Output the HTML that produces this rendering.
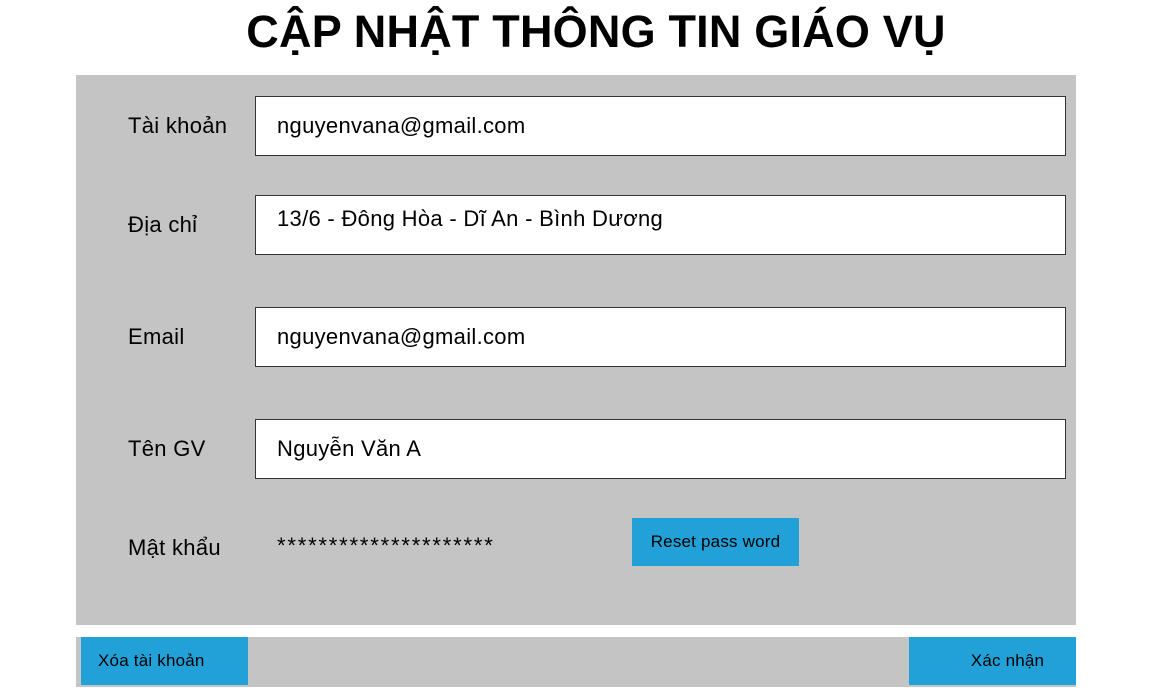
<!DOCTYPE html>
<html><head><meta charset="utf-8"><style>
body{margin:0;width:1152px;height:700px;background:#fff;font-family:"Liberation Sans",sans-serif;position:relative;overflow:hidden;color:#000}
.a{position:absolute}
h1{position:absolute;left:0;width:1192px;top:5px;margin:0;text-align:center;font-size:45px;font-weight:bold;line-height:54px;letter-spacing:0.2px}
.panel{left:76px;top:75px;width:1000px;height:550px;background:#c4c4c4}
.lab{left:128px;font-size:22px;line-height:30px;letter-spacing:0.3px}
.inp{left:255px;width:809px;height:58px;background:#fff;border:1px solid #333}
.inp span{position:absolute;left:21px;font-size:22px;line-height:30px;top:14px;letter-spacing:0.3px}
.btn{background:#21a1d8;font-size:17px;line-height:48px;height:48px;letter-spacing:0.2px}
</style></head><body>
<h1>CẬP NHẬT THÔNG TIN GIÁO VỤ</h1>
<div class="a panel"></div>
<div class="a lab" style="top:111px">Tài khoản</div>
<div class="a inp" style="top:96px"><span>nguyenvana@gmail.com</span></div>
<div class="a lab" style="top:210px">Địa chỉ</div>
<div class="a inp" style="top:195px"><span style="top:8px">13/6 - Đông Hòa - Dĩ An - Bình Dương</span></div>
<div class="a lab" style="top:322px">Email</div>
<div class="a inp" style="top:307px"><span>nguyenvana@gmail.com</span></div>
<div class="a lab" style="top:434px">Tên GV</div>
<div class="a inp" style="top:419px"><span>Nguyễn Văn A</span></div>
<div class="a lab" style="top:533px">Mật khẩu</div>
<div class="a" style="left:277px;top:531px;font-size:22px;line-height:30px;letter-spacing:1.8px">*********************</div>
<div class="a btn" style="left:632px;top:518px;width:167px;text-align:center">Reset pass word</div>
<div class="a" style="left:76px;top:637px;width:1000px;height:50px;background:#c4c4c4"></div>
<div class="a btn" style="left:81px;top:637px;width:150px;padding-left:17px">Xóa tài khoản</div>
<div class="a btn" style="left:909px;top:637px;width:167px;text-align:center;padding-left:30px;box-sizing:border-box">Xác nhận</div>
</body></html>
